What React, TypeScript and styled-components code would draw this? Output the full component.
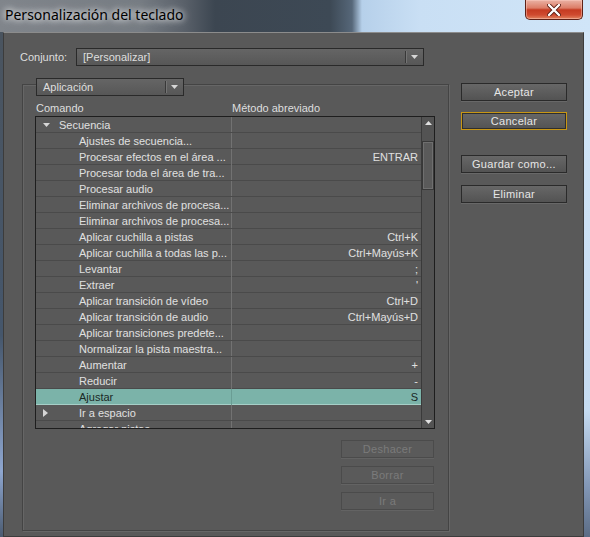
import React from 'react';
import styled, { createGlobalStyle } from 'styled-components';

const GlobalStyle = createGlobalStyle`
  html, body {
    margin: 0;
    padding: 0;
    background: #cfe4f6;
  }
  body {
    font-family: "Liberation Sans", Arial, sans-serif;
  }
`;

const Window = styled.div`
  width: 590px;
  height: 537px;
  display: flex;
  flex-direction: column;
  overflow: hidden;
`;

const TitleBar = styled.div`
  height: 32px;
  flex: none;
  display: flex;
  justify-content: space-between;
  align-items: flex-start;
  background: linear-gradient(
    90deg,
    #80858b 0,
    #767c83 140px,
    #596069 185px,
    #3c4651 215px,
    #3d4955 330px,
    #566779 352px,
    #b6d0ea 362px,
    #c9dff4 420px,
    #d0e5f8 100%
  );
`;

const TitleText = styled.div`
  padding-left: 5px;
  line-height: 30px;
  font-family: "Noto Sans", "Liberation Sans", sans-serif;
  font-size: 14px;
  color: #000;
  text-shadow: 0 0 6px #fff, 0 0 10px rgba(255, 255, 255, 0.8);
`;

const CloseButton = styled.div`
  width: 58px;
  height: 20px;
  margin-right: 7px;
  box-sizing: border-box;
  border: 1px solid #5e2117;
  border-top: none;
  border-radius: 0 0 5px 5px;
  background: linear-gradient(#eab2a5 0%, #dc7d67 42%, #c53b22 52%, #cf4a2f 78%, #e1835f 100%);
  box-shadow: inset 0 0 0 1px rgba(255, 210, 200, 0.45);
  display: flex;
  align-items: center;
  justify-content: center;
`;

const Frame = styled.div`
  flex: 1;
  display: flex;
`;

const LeftEdge = styled.div`
  width: 3px;
  background: linear-gradient(#4a545f 0%, #45566b 60%, #8ea6cf 87%, #4b5b71 100%);
`;

const RightEdge = styled.div`
  flex: 1;
  background: linear-gradient(#d3e7f9 0%, #c5dbf1 75%, #8297b6 90%, #5b6c85 100%);
`;

const Body = styled.div`
  width: 581px;
  box-sizing: border-box;
  border: 1px solid #3c3c3c;
  border-top-color: #8c8c8c;
  background: #595959;
  padding: 15px 0 0 16px;
  display: flex;
  flex-direction: column;
  font-size: 11px;
  color: #dedede;
`;

const SetRow = styled.div`
  height: 18px;
  display: flex;
  align-items: center;
`;

const Label = styled.div`
  width: 56px;
`;

const Select = styled.div<{ $w: number }>`
  width: ${({ $w }) => $w}px;
  height: 18px;
  box-sizing: border-box;
  border: 1px solid #2a2a2a;
  background: linear-gradient(#656565, #575757);
  display: flex;
  align-items: center;
  padding-left: 6px;
  flex: none;
`;

const SelectText = styled.div`
  flex: 1;
  white-space: nowrap;
`;

const SelectSep = styled.div`
  width: 1px;
  height: 12px;
  background: #383838;
  box-shadow: 1px 0 0 #747474;
`;

const SelectArrow = styled.div`
  width: 17px;
  display: flex;
  justify-content: center;
`;

const Main = styled.div`
  display: flex;
  margin-top: 12px;
`;

const Group = styled.div`
  margin: 6px 0 0 2px;
  width: 427px;
  height: 447px;
  box-sizing: border-box;
  border: 1px solid #444;
  box-shadow: inset 1px 1px 0 #666, 1px 1px 0 #666;
  padding-left: 12px;
  display: flex;
  flex-direction: column;
`;

const Legend = styled.div`
  margin: -7px 0 0 1px;
`;

const ListHeader = styled.div`
  display: grid;
  grid-template-columns: 196px 1fr;
  padding: 4px 0 0 1px;
  line-height: 16px;
`;

const List = styled.div`
  width: 400px;
  height: 313px;
  box-sizing: border-box;
  border: 1px solid #1e1e1e;
  background: #595959;
  display: flex;
`;

const Rows = styled.div`
  flex: 1;
  overflow: hidden;
`;

const Row = styled.div<{ $selected?: boolean }>`
  display: grid;
  grid-template-columns: 196px 1fr;
  height: 16px;
  box-sizing: border-box;
  border-bottom: 1px solid ${({ $selected }) => ($selected ? '#a6cfc7' : '#4a4a4a')};
  background: ${({ $selected }) => ($selected ? '#7bb3a9' : 'transparent')};
  color: ${({ $selected }) => ($selected ? '#1a2926' : '#e0e0e0')};
  line-height: 16px;
`;

const NameCell = styled.div<{ $selected?: boolean }>`
  display: flex;
  padding-left: 7px;
  border-right: 1px solid ${({ $selected }) => ($selected ? '#6a9d94' : '#727272')};
  white-space: nowrap;
  overflow: hidden;
`;

const Indent = styled.div<{ $w: number }>`
  flex: none;
  width: ${({ $w }) => $w}px;
  display: flex;
  align-items: center;
`;

const KeyCell = styled.div`
  text-align: right;
  padding-right: 3px;
  white-space: nowrap;
`;

const Scrollbar = styled.div`
  width: 13px;
  box-sizing: border-box;
  border-left: 1px solid #3a3a3a;
  background: #535353;
  display: flex;
  flex-direction: column;
`;

const ScrollArrow = styled.div`
  height: 12px;
  display: flex;
  align-items: center;
  justify-content: center;
`;

const Thumb = styled.div`
  margin-top: 12px;
  height: 49px;
  box-sizing: border-box;
  border: 1px solid #383838;
  box-shadow: inset 0 0 0 1px #6f6f6f;
  background: #5a5a5a;
`;

const Track = styled.div`
  flex: 1;
`;

const ListActions = styled.div`
  width: 399px;
  margin-top: 11px;
  display: flex;
  flex-direction: column;
  align-items: flex-end;
  gap: 8px;
`;

const Side = styled.div`
  margin-left: 12px;
  padding-top: 5px;
  display: flex;
  flex-direction: column;
`;

const Button = styled.button<{ $w: number; $mt?: number; $focus?: boolean }>`
  width: ${({ $w }) => $w}px;
  height: 18px;
  margin-top: ${({ $mt }) => $mt ?? 0}px;
  box-sizing: border-box;
  padding: 0;
  border: 1px solid ${({ $focus }) => ($focus ? '#c99714' : '#2a2a2a')};
  box-shadow: ${({ $focus }) =>
    $focus ? 'inset 0 0 0 1px #2e2e2e' : '0 1px 0 #686868'};
  background: linear-gradient(#676767, #535353);
  color: #e6e6e6;
  font-family: "Liberation Sans", Arial, sans-serif;
  font-size: 11px;
  letter-spacing: 0.3px;

  &:disabled {
    background: #5a5a5a;
    border-color: #4b4b4b;
    box-shadow: 0 1px 0 #636363;
    color: #7b7b7b;
  }
`;

const Tri = ({ dir, color = '#d6d6d6' }: { dir: 'down' | 'right' | 'up'; color?: string }) => {
  if (dir === 'right')
    return (
      <svg width="5" height="8" viewBox="0 0 5 8">
        <polygon points="0,0 5,4 0,8" fill={color} />
      </svg>
    );
  if (dir === 'up')
    return (
      <svg width="7" height="4" viewBox="0 0 7 4">
        <polygon points="0,4 7,4 3.5,0" fill={color} />
      </svg>
    );
  return (
    <svg width="7" height="4" viewBox="0 0 7 4">
      <polygon points="0,0 7,0 3.5,4" fill={color} />
    </svg>
  );
};

type Item = {
  name: string;
  key?: string;
  level: 0 | 1;
  toggle?: 'down' | 'right';
  selected?: boolean;
};

const items: Item[] = [
  { name: 'Secuencia', level: 0, toggle: 'down' },
  { name: 'Ajustes de secuencia...', level: 1 },
  { name: 'Procesar efectos en el área ...', key: 'ENTRAR', level: 1 },
  { name: 'Procesar toda el área de tra...', level: 1 },
  { name: 'Procesar audio', level: 1 },
  { name: 'Eliminar archivos de procesa...', level: 1 },
  { name: 'Eliminar archivos de procesa...', level: 1 },
  { name: 'Aplicar cuchilla a pistas', key: 'Ctrl+K', level: 1 },
  { name: 'Aplicar cuchilla a todas las p...', key: 'Ctrl+Mayús+K', level: 1 },
  { name: 'Levantar', key: ';', level: 1 },
  { name: 'Extraer', key: "'", level: 1 },
  { name: 'Aplicar transición de vídeo', key: 'Ctrl+D', level: 1 },
  { name: 'Aplicar transición de audio', key: 'Ctrl+Mayús+D', level: 1 },
  { name: 'Aplicar transiciones predete...', level: 1 },
  { name: 'Normalizar la pista maestra...', level: 1 },
  { name: 'Aumentar', key: '+', level: 1 },
  { name: 'Reducir', key: '-', level: 1 },
  { name: 'Ajustar', key: 'S', level: 1, selected: true },
  { name: 'Ir a espacio', level: 1, toggle: 'right' },
  { name: 'Agregar pistas', level: 1 },
];

export default function App() {
  return (
    <>
      <GlobalStyle />
      <Window>
        <TitleBar>
          <TitleText>Personalización del teclado</TitleText>
          <CloseButton>
            <svg width="14" height="12" viewBox="0 0 14 12">
              <path
                d="M2 1 L12 11 M12 1 L2 11"
                stroke="#5a1c12"
                strokeWidth="4"
                strokeLinecap="round"
              />
              <path d="M2 1 L12 11 M12 1 L2 11" stroke="#fff" strokeWidth="2.4" strokeLinecap="round" />
            </svg>
          </CloseButton>
        </TitleBar>
        <Frame>
          <LeftEdge />
          <Body>
            <SetRow>
              <Label>Conjunto:</Label>
              <Select $w={348}>
                <SelectText>[Personalizar]</SelectText>
                <SelectSep />
                <SelectArrow>
                  <Tri dir="down" />
                </SelectArrow>
              </Select>
            </SetRow>
            <Main>
              <Group>
                <Legend>
                  <Select $w={148}>
                    <SelectText>Aplicación</SelectText>
                    <SelectSep />
                    <SelectArrow>
                      <Tri dir="down" />
                    </SelectArrow>
                  </Select>
                </Legend>
                <ListHeader>
                  <div>Comando</div>
                  <div>Método abreviado</div>
                </ListHeader>
                <List>
                  <Rows>
                    {items.map((it, i) => (
                      <Row key={i} $selected={it.selected}>
                        <NameCell $selected={it.selected}>
                          <Indent $w={it.level === 0 ? 16 : 36}>
                            {it.toggle && <Tri dir={it.toggle} />}
                          </Indent>
                          {it.name}
                        </NameCell>
                        <KeyCell>{it.key}</KeyCell>
                      </Row>
                    ))}
                  </Rows>
                  <Scrollbar>
                    <ScrollArrow>
                      <Tri dir="up" color="#e0e0e0" />
                    </ScrollArrow>
                    <Thumb />
                    <Track />
                    <ScrollArrow>
                      <Tri dir="down" color="#e0e0e0" />
                    </ScrollArrow>
                  </Scrollbar>
                </List>
                <ListActions>
                  <Button $w={93} disabled>
                    Deshacer
                  </Button>
                  <Button $w={93} disabled>
                    Borrar
                  </Button>
                  <Button $w={93} disabled>
                    Ir a
                  </Button>
                </ListActions>
              </Group>
              <Side>
                <Button $w={106}>Aceptar</Button>
                <Button $w={106} $mt={11} $focus>
                  Cancelar
                </Button>
                <Button $w={106} $mt={25}>
                  Guardar como...
                </Button>
                <Button $w={106} $mt={12}>
                  Eliminar
                </Button>
              </Side>
            </Main>
          </Body>
          <RightEdge />
        </Frame>
      </Window>
    </>
  );
}
